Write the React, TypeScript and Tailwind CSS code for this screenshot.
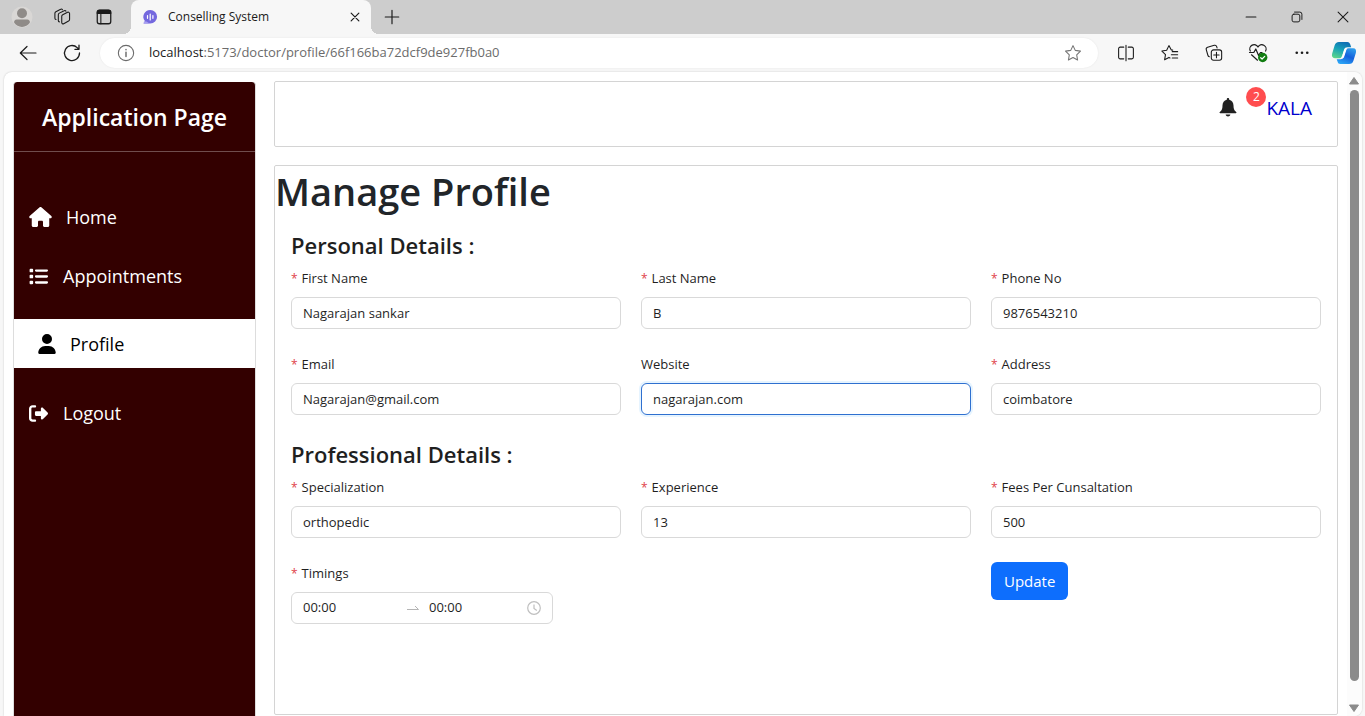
import type { ReactNode } from "react";
import { FaHouse, FaList, FaRightFromBracket, FaUser } from "react-icons/fa6";

function Svg({ children, size, className }: { children: ReactNode; size: string; className?: string }) {
  return (
    <svg viewBox="0 0 20 20" fill="none" stroke="currentColor" strokeWidth="1.2" strokeLinecap="round" strokeLinejoin="round" className={`${size} ${className ?? ""}`} aria-hidden="true">
      {children}
    </svg>
  );
}

const iconButton = "flex size-6 shrink-0 items-center justify-center text-[#1b1b1b]";

function TabBar() {
  return (
    <header className="flex h-[34px] bg-[#cdcdcd]">
      <div className="flex items-center gap-[17px] pl-[10px]">
        <button aria-label="Account" className={iconButton}>
          <svg viewBox="0 0 22 22" className="size-[22px]" aria-hidden="true">
            <circle cx="11" cy="11" r="10.5" fill="#d9d7d5" />
            <circle cx="11" cy="7.3" r="5" fill="#8f8b88" />
            <path d="M3.2 16.8a2.6 2.6 0 0 1 2.6-3.3h10.4a2.6 2.6 0 0 1 2.6 3.3A10 10 0 0 1 11 21a10 10 0 0 1-7.8-4.2z" fill="#8f8b88" />
          </svg>
        </button>
        <button aria-label="Workspaces" className={iconButton}>
          <Svg size="size-[18px]">
            <path d="M8.600 9.200a2 2 0 0 1 1.100-1.700l5.400-2.700a1.500 1.500 0 0 1 2.200 1.300v6.600a2 2 0 0 1-1.100 1.700l-5.400 3.100a1.500 1.500 0 0 1-2.200-1.300z" />
            <path d="M6 15.400A1.500 1.500 0 0 1 4.800 14V7.400a2 2 0 0 1 1.100-1.700l5.400-2.700a1.500 1.500 0 0 1 2 .5" />
            <path d="M2.200 12.800A1.500 1.500 0 0 1 1 11.400V5.900a2 2 0 0 1 1.100-1.700l5.300-2.800a1.500 1.500 0 0 1 2 .5" />
          </Svg>
        </button>
        <button aria-label="Tab actions" className={iconButton}>
          <Svg size="size-[18px]">
            <rect x="2.500" y="2.500" width="15" height="15" rx="2.500" strokeWidth="1.400" />
            <path d="M2.500 6V5A2.500 2.500 0 0 1 5 2.500h10A2.500 2.500 0 0 1 17.500 5v1z" fill="currentColor" />
            <path d="M6.500 6.500v11" />
          </Svg>
        </button>
      </div>
      <div className="relative ml-[15px] flex w-60 items-center rounded-t-lg bg-[#f7f7f7] pr-2 pl-[11px] before:absolute before:bottom-0 before:-left-2 before:size-2 before:bg-[radial-gradient(circle_at_0_0,#cdcdcd_8px,#f7f7f7_8px)] after:absolute after:-right-2 after:bottom-0 after:size-2 after:bg-[radial-gradient(circle_at_100%_0,#cdcdcd_8px,#f7f7f7_8px)]">
        <svg viewBox="0 0 16 16" className="size-4" aria-hidden="true">
          <path d="M8.3 1a6.800 6.800 0 0 1 0 13.600H1.600l1.300-2.500A6.800 6.800 0 0 1 8.300 1z" fill="#7468de" />
          <path d="M2 12.500h2.500l3 2.100h-6z" fill="#a79ff0" />
          <path d="M5.500 6.500v2.800M8.200 5v6M10.900 6.500v2.800" stroke="#fff" strokeWidth="1.200" strokeLinecap="round" />
        </svg>
        <span className="ml-[10px] flex-1 text-xs text-[#1b1b1b]">Conselling System</span>
        <button aria-label="Close tab" className="flex size-4 items-center justify-center text-[#1b1b1b]">
          <Svg size="size-[14px]"><path d="M4.500 4.500l11 11M15.500 4.500l-11 11" strokeWidth="1.700" /></Svg>
        </button>
      </div>
      <button aria-label="New tab" className="ml-[11px] flex w-5 items-center justify-center text-[#1b1b1b]">
        <Svg size="size-[18px]"><path d="M10 2.500v15M2.500 10h15" strokeWidth="1.300" /></Svg>
      </button>
      <div className="ml-auto flex items-center gap-[22px] pr-[10px]">
        <button aria-label="Minimize" className={iconButton}>
          <Svg size="size-[14px]"><path d="M3 10h14" strokeWidth="1.500" /></Svg>
        </button>
        <button aria-label="Restore" className={iconButton}>
          <Svg size="size-[14px]">
            <rect x="3" y="6" width="11" height="11" rx="2.500" strokeWidth="1.400" />
            <path d="M6.500 3H14a3 3 0 0 1 3 3v7.500" strokeWidth="1.400" />
          </Svg>
        </button>
        <button aria-label="Close" className={iconButton}>
          <Svg size="size-[14px]"><path d="M3 3l14 14M17 3L3 17" strokeWidth="1.500" /></Svg>
        </button>
      </div>
    </header>
  );
}

function AddressBar() {
  return (
    <div className="flex h-[38px] items-center bg-[#f7f7f7]">
      <div className="flex items-center gap-5 pl-4">
        <button aria-label="Back" className={iconButton}>
          <Svg size="size-5"><path d="M18 10H2.500M9 3.500L2.300 10 9 16.500" /></Svg>
        </button>
        <button aria-label="Refresh" className={iconButton}>
          <Svg size="size-5"><path d="M17.500 10a7.500 7.500 0 1 1-2.300-5.400l1.800 1.700M17 2.200v4.100h-4.100" strokeWidth="1.300" /></Svg>
        </button>
      </div>
      <div className="ml-4 flex h-[30px] flex-1 items-center rounded-full bg-white pr-4 pl-[17px] shadow-[0_0_2px_rgba(0,0,0,0.08)]">
        <Svg size="size-[18px]" className="shrink-0 text-[#6b6b6b]">
          <circle cx="10" cy="10" r="8.500" />
          <path d="M10 9v5M10 6v.3" strokeWidth="1.600" />
        </Svg>
        <p className="ml-[14px] flex-1 text-[13px] text-[#6b6b6b]">
          <span className="text-[#1b1b1b]">localhost</span>:5173/doctor/profile/66f166ba72dcf9de927fb0a0
        </p>
        <button aria-label="Add to favorites" className="text-[#757575]">
          <Svg size="size-[18px]"><path d="M10 1.800l2.500 5.300 5.800.8-4.200 4.100 1 5.800-5.100-2.800-5.100 2.800 1-5.800L1.700 7.900l5.800-.8z" /></Svg>
        </button>
      </div>
      <div className="ml-4 flex items-center gap-5">
        <button aria-label="Split screen" className={iconButton}>
          <Svg size="size-[18px]"><path d="M10 1.500v17M7.500 3.500h-4A1.700 1.700 0 0 0 1.800 5.200v9.600a1.700 1.700 0 0 0 1.700 1.700h4M12.500 3.500h4a1.700 1.700 0 0 1 1.700 1.700v9.600a1.700 1.700 0 0 1-1.700 1.700h-4" /></Svg>
        </button>
        <button aria-label="Favorites" className={iconButton}>
          <Svg size="size-[18px]"><path d="M13 6.800l-1.700-.3L8.800 1.800 6.300 7l-5.300.8 4 4-1 5.700 4.800-2.600 1.200.6M12.500 8.500h6M11.500 12h7M12.500 15.500h6" /></Svg>
        </button>
        <button aria-label="Collections" className={iconButton}>
          <Svg size="size-[18px]">
            <rect x="7" y="6.500" width="11.500" height="11.500" rx="2.500" />
            <path d="M12.750 9.300v6M9.700 12.300h6M4.800 14.200a2.500 2.500 0 0 1-1.600-1.700L1.400 6.300a2.200 2.200 0 0 1 1.500-2.700l7.400-2.100a2.200 2.200 0 0 1 2.700 1.500l.4 1.300" />
          </Svg>
        </button>
        <button aria-label="Browser essentials" className={iconButton}>
          <Svg size="size-5">
            <path d="M2.300 8a4.200 4.200 0 0 1 7.700-4 4.200 4.200 0 0 1 7.600 4M1.500 9.500h4.300l2-3.500 2.800 6.500 1.900-3h1.500M3.500 11.800l6 5.400" />
            <circle cx="14.700" cy="14.500" r="4.700" fill="#107c10" stroke="none" />
            <path d="M12.700 14.700l1.400 1.300 2.600-2.700" stroke="#fff" />
          </Svg>
        </button>
        <button aria-label="More" className={iconButton}>
          <svg viewBox="0 0 16 4" className="w-[14px]" fill="currentColor" aria-hidden="true"><circle cx="2" cy="2" r="1.500" /><circle cx="8" cy="2" r="1.500" /><circle cx="14" cy="2" r="1.500" /></svg>
        </button>
      </div>
      <button aria-label="Copilot" className="mr-2 ml-[17px] shrink-0">
        <svg viewBox="0 0 26 26" className="size-[26px]" aria-hidden="true">
          <defs>
            <linearGradient id="cpA" x1="0.6" y1="0" x2="0.2" y2="1">
              <stop offset="0" stopColor="#0f6fb4" />
              <stop offset="0.45" stopColor="#17a2b8" />
              <stop offset="1" stopColor="#5dd68a" />
            </linearGradient>
            <linearGradient id="cpB" x1="0.8" y1="0" x2="0.3" y2="1">
              <stop offset="0" stopColor="#2f9fec" />
              <stop offset="0.5" stopColor="#1560dc" />
              <stop offset="1" stopColor="#2ba4f5" />
            </linearGradient>
          </defs>
          <path d="M8 2h8.500c1.500 0 2.300 1 2.700 2.300l1 3h-3.700c-1.800 0-2.800 1-3.300 2.700l-1.900 6c-.4 1.400-1.200 2.200-2.700 2.200H3.800C1.300 18.200.5 16.200 1.100 13.800L3.600 5.500C4.300 3.200 5.600 2 8 2z" fill="url(#cpA)" />
          <path d="M18 24H9.300c-1.500 0-2.300-1-2.700-2.300l-.9-2.500h3.800c1.800 0 2.800-1 3.300-2.700l2-6c.4-1.400 1.200-2.200 2.700-2.200h4.700c2.500 0 3.300 2 2.700 4.400l-2.500 8C21.700 22.800 20.400 24 18 24z" fill="url(#cpB)" />
          <path d="M10.700 17.800c.7-.4 1-1.100 1.300-2l1.700-5.600c.3-.9.700-1.500 1.600-1.900-.5.600-.7 1.300-1 2.200l-1.800 5.700c-.3.900-.8 1.400-1.800 1.600z" stroke="#fff" strokeWidth="1.600" fill="#fff" />
        </svg>
      </button>
    </div>
  );
}

const links = [
  { label: "Home", icon: <FaHouse className="h-5 w-[23px]" />, gap: "gap-[14px]" },
  { label: "Appointments", icon: <FaList className="size-[19px]" />, gap: "gap-[15px]" },
  { label: "Profile", icon: <FaUser className="size-5" />, gap: "gap-[13px]", active: true },
  { label: "Logout", icon: <FaRightFromBracket className="size-[19px]" />, gap: "gap-[15px]" },
];

function Sidebar() {
  return (
    <aside className="w-[243px] shrink-0 overflow-hidden rounded-t border-x border-[#dddddd] bg-[#330000] text-white">
      <div className="flex h-[70px] items-center justify-center border-b border-[#704d4d] pt-px">
        <h2 className="text-[23px] font-semibold">Application Page</h2>
      </div>
      <nav className="mt-[45px] flex flex-col gap-[19px] text-lg">
        {links.map((l) => (
          <a
            key={l.label}
            href="#"
            className={`flex items-center ${l.gap} ${l.active ? "mt-1 mb-[6px] h-[49px] bg-white pl-[23px] text-black" : "h-10 pl-[15px]"}`}
          >
            {l.icon}
            {l.label}
          </a>
        ))}
      </nav>
    </aside>
  );
}

function Label({ id, children, required = true }: { id: string; children: ReactNode; required?: boolean }) {
  return (
    <label htmlFor={id} className="mb-[7px] flex h-[23px] items-center gap-1 pt-px text-[13px]">
      {required && <span className="text-xs text-[#e0444a]">*</span>}
      {children}
    </label>
  );
}

function Field({ id, label, value, required = true, focused = false }: { id: string; label: string; value: string; required?: boolean; focused?: boolean }) {
  return (
    <div>
      <Label id={id} required={required}>{label}</Label>
      <input
        id={id}
        defaultValue={value}
        className={`h-8 w-full rounded-md border bg-white px-[11px] text-[13px] outline-none ${focused ? "border-[#2f70d0] shadow-[0_0_0_2px_rgba(5,145,255,0.1)]" : "border-[#d9d9d9]"}`}
      />
    </div>
  );
}

const sectionTitle = "mb-2 h-[29px] text-[22px] leading-[30px] font-semibold";
const row = "grid grid-cols-3 gap-x-5 gap-y-6";

function ProfileForm() {
  return (
    <form className="px-4 pt-2 text-[#1f1f1f]" onSubmit={(e) => e.preventDefault()}>
      <h2 className={sectionTitle}>Personal Details :</h2>
      <div className={row}>
        <Field id="first" label="First Name" value="Nagarajan sankar" />
        <Field id="last" label="Last Name" value="B" />
        <Field id="phone" label="Phone No" value="9876543210" />
        <Field id="email" label="Email" value="Nagarajan@gmail.com" />
        <Field id="website" label="Website" value="nagarajan.com" required={false} focused />
        <Field id="address" label="Address" value="coimbatore" />
      </div>
      <h2 className={`mt-6 ${sectionTitle}`}>Professional Details :</h2>
      <div className={row}>
        <Field id="spec" label="Specialization" value="orthopedic" />
        <Field id="exp" label="Experience" value="13" />
        <Field id="fees" label="Fees Per Cunsaltation" value="500" />
        <div>
          <Label id="start">Timings</Label>
          <div className="flex h-8 w-[262px] items-center rounded-md border border-[#d9d9d9] px-[11px] text-[13px]">
            <input id="start" defaultValue="00:00" className="w-[104px] outline-none" />
            <svg viewBox="0 0 12 6" className="h-[6px] w-3 shrink-0" fill="none" stroke="#b5b5b5" strokeWidth="1" aria-hidden="true">
              <path d="M0 4.500h11.500L8 1" />
            </svg>
            <input aria-label="End time" defaultValue="00:00" className="ml-[10px] w-[98px] outline-none" />
            <svg viewBox="0 0 14 14" className="size-[14px] shrink-0" fill="none" stroke="#bfbfbf" strokeWidth="1.200" aria-hidden="true">
              <circle cx="7" cy="7" r="6.300" />
              <path d="M7 3.500V7.500l2.800 2" />
            </svg>
          </div>
        </div>
        <button type="submit" className="col-start-3 h-[38px] w-fit rounded-md bg-[#0d6efd] px-[13px] text-[15px] text-white">Update</button>
      </div>
    </form>
  );
}

function ScrollBar() {
  return (
    <div className="flex w-[15px] shrink-0 flex-col items-center justify-between bg-[#fcfcfc] pt-[5px] pr-px pb-1" aria-hidden="true">
      <svg viewBox="0 0 10 8" className="h-2 w-[10px]" fill="#8b8b8b"><path d="M5 0.500L9.500 7H.5z" stroke="#8b8b8b" strokeLinejoin="round" /></svg>
      <div className="mt-[5px] mb-[23px] w-[9px] flex-1 rounded-full bg-[#8b8b8b]" />
      <svg viewBox="0 0 10 8" className="h-2 w-[10px]" fill="#8b8b8b"><path d="M5 7.500L9.500 1H.5z" stroke="#8b8b8b" strokeLinejoin="round" /></svg>
    </div>
  );
}

export default function App() {
  return (
    <div className="flex min-h-screen flex-col bg-[#f7f7f7] font-['Open_Sans','Noto_Sans',sans-serif]">
      <TabBar />
      <AddressBar />
      <div className="mr-[3px] ml-1 flex flex-1 overflow-hidden rounded-lg rounded-bl-none bg-white shadow-[0_0_2px_rgba(0,0,0,0.2)]">
        <div className="flex flex-1 pr-[9px] pl-[9px]">
          <div className="flex pt-[10px]">
            <Sidebar />
          </div>
          <main className="ml-[18px] flex flex-1 flex-col gap-[18px] pt-[9px] pb-px">
            <section className="flex h-[66px] justify-end rounded-xs border border-[#d4d4d4] pr-[25px]">
              <button aria-label="Notifications" className="relative mt-[15px] h-5 w-[18px] text-[#212121]">
                <svg viewBox="0 0 18 19" className="h-[19px] w-[18px]" fill="currentColor" aria-hidden="true">
                  <path d="M9 0c.7 0 1.200.5 1.200 1.200v.6c2.700.6 4.300 2.900 4.300 5.600 0 3 .5 4.800 2.700 6.600.5.4.3 1.200-.4 1.200H1.200c-.7 0-.9-.8-.4-1.200C3 12.200 3.500 10.400 3.500 7.400c0-2.700 1.600-5 4.300-5.600v-.6C7.800.5 8.300 0 9 0z" />
                  <path d="M6.600 16.400h4.800c-.2 1.200-1.200 2-2.400 2s-2.200-.8-2.400-2z" />
                </svg>
                <span className="absolute -top-[10px] left-[27px] flex size-5 items-center justify-center rounded-full bg-[#ff4d4f] text-xs text-white">2</span>
              </button>
              <a href="#" className="mt-3 ml-[29px] h-7 text-[19px] leading-7 text-[#0000cd]">KALA</a>
            </section>
            <section className="flex-1 rounded-xs border border-[#d4d4d4]">
              <h1 className="mb-2 h-12 text-[38px] leading-[50px] font-semibold text-[#212529]">Manage Profile</h1>
              <ProfileForm />
            </section>
          </main>
        </div>
        <ScrollBar />
      </div>
    </div>
  );
}
